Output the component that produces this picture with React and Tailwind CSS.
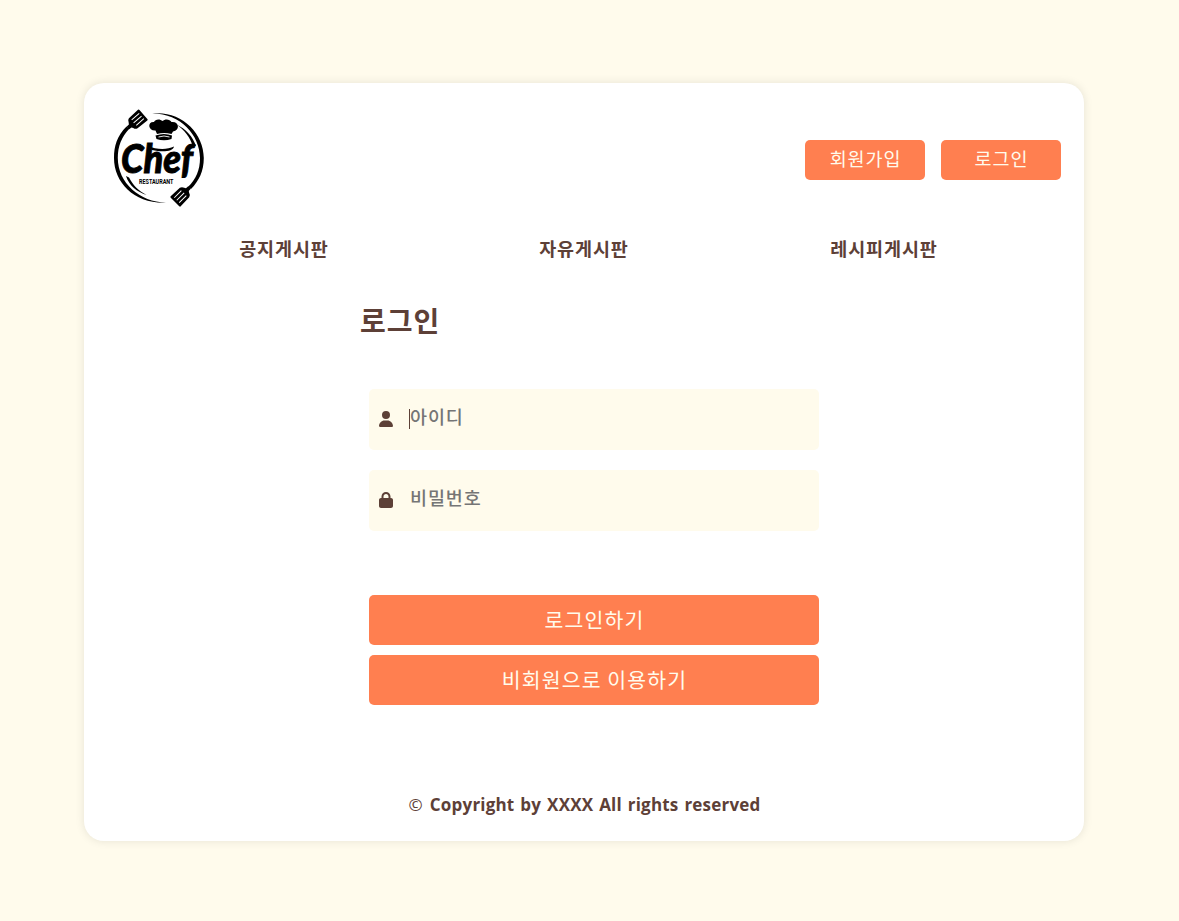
import React from "react";

const FONT = "font-['Noto_Sans_CJK_KR',sans-serif]";

function Spatula() {
  return (
    <g>
      <path d="M-6 -8.500 H6 Q7.200 -8.500 7.100 -7.500 L6.600 5 Q6 7.500 3.500 8 L2 9 L1.800 12 H-1.800 L-2 9 L-3.500 8 Q-6 7.500 -6.600 5 L-7.100 -7.500 Q-7.200 -8.500 -6 -8.500Z" fill="#000" />
      <path d="M-3.500 -6 V4 M0 -6 V4.500 M3.500 -6 V4" stroke="#fff" strokeWidth="1" />
    </g>
  );
}

function Logo() {
  return (
    <svg className="h-[100px] w-[100px]" viewBox="0 0 100 100" aria-label="Chef Restaurant">
      <path d="M17.500 18.500 C8 28 5 38 5 50 C5 75 26 96 57 94.700 C31 94 8.800 75 8.800 50 C8.800 38 12.500 29 20.500 20.500Z" />
      <path d="M43 5.500 C71 2 94.800 24 94.800 50 C94.800 63 90 73 82 81 L79 79 C87 71 91 62 91 50 C91 27 71 5 43 5.500Z" />
      <path d="M67 16.300 C77 21 84 29 87 38 L84 39 C81 29 76 22.500 67 16.300Z" />
      <path d="M17 68 L20 69.500 C24 77 29 82.500 37.700 87 C28 84 20 77.500 17 68Z" />
      <g transform="translate(28 12) rotate(49)"><Spatula /></g>
      <g transform="translate(72 88) rotate(225)"><Spatula /></g>
      <path d="M48 26 L46.500 22.500 C39 23 38 13.500 45 14 C46 11 51 10.500 53.500 13 C56 10.500 61 11 62.500 14 C70 13 71.500 22 64 23.500 L62.500 26 Q55 24 48 26Z" />
      <path d="M46.500 27.500 Q55 24.500 63 27.500 L62.500 31 Q55 33.500 47.500 31Z" />
      <path d="M49.500 29 Q55 27 60.500 29" stroke="#fff" strokeWidth="0.900" fill="none" />
      <text x="12" y="64.500" fontFamily="Lato, sans-serif" fontWeight="900" fontStyle="italic" fontSize="40" textLength="72" lengthAdjust="spacingAndGlyphs" stroke="#000" strokeWidth="0.900">Chef</text>
      <path d="M39 38 C47 41.500 58 42 65 38.500 C64 43.500 54 44.500 43 42Z" />
      <text x="30" y="75.500" fontFamily="Roboto, sans-serif" fontWeight="700" fontSize="7.700" textLength="34.500" lengthAdjust="spacingAndGlyphs">RESTAURANT</text>
    </svg>
  );
}

function UserIcon() {
  return (
    <svg className="h-4 w-[14px]" viewBox="0 0 448 512" fill="currentColor">
      <path d="M224 256A128 128 0 1 0 224 0a128 128 0 1 0 0 256zm-45.700 48C79.800 304 0 383.800 0 482.300C0 498.700 13.300 512 29.700 512H418.300c16.400 0 29.700-13.300 29.700-29.700C448 383.800 368.200 304 269.700 304H178.300z" />
    </svg>
  );
}

function LockIcon() {
  return (
    <svg className="h-4 w-[14px]" viewBox="0 0 448 512" fill="currentColor">
      <path d="M144 144v48H304V144c0-44.200-35.800-80-80-80s-80 35.800-80 80zM80 192V144C80 64.500 144.500 0 224 0s144 64.500 144 144v48h16c35.300 0 64 28.700 64 64V448c0 35.300-28.700 64-64 64H64c-35.300 0-64-28.700-64-64V256c0-35.300 28.700-64 64-64H80z" />
    </svg>
  );
}

function Field({ icon, label, focused }) {
  return (
    <div className="flex h-[61px] items-center rounded-[5px] bg-[#fffbec] pb-[1px] pl-[10px] text-[#5d4037]">
      {icon}
      <span className={`ml-4 h-5 w-px ${focused ? "bg-[#5d4037]" : "bg-transparent"}`} />
      <span className="-mt-[6px] text-[18.500px] font-medium leading-[27px] tracking-[0.900px] text-[#757575]">{label}</span>
    </div>
  );
}

export default function App() {
  return (
    <div className={`flex h-[921px] w-full bg-[#fffbec] pl-[84px] pt-[83px] ${FONT}`}>
      <main className="flex h-[758px] w-[1000px] flex-col rounded-[20px] bg-white text-[#5d4037] shadow-[0_0_10px_rgba(0,0,0,0.1)]">
        <header className="flex h-[150px] items-center justify-between pl-[25px] pr-[23px]">
          <Logo />
          <div className="flex gap-4 pt-1 text-[18.500px] tracking-[0.900px] text-[#fffbec]">
            <button className="h-10 w-[120px] rounded-[5px] bg-[#ff7f50] pb-[3px] pl-[1px]">회원가입</button>
            <button className="h-10 w-[120px] rounded-[5px] bg-[#ff7f50] pb-[3px] pl-[1px]">로그인</button>
          </div>
        </header>
        <nav className="grid h-[34px] grid-cols-3 px-[50px] text-center text-[18.500px] font-bold leading-[30px] tracking-[0.900px]">
          <span>공지게시판</span>
          <span>자유게시판</span>
          <span>레시피게시판</span>
        </nav>
        <section className="flex flex-col pl-[285px] pt-[33px]">
          <h1 className="-ml-[9px] h-10 text-[28px] font-bold leading-10 tracking-[1px]">로그인</h1>
          <div className="mt-[49px] flex w-[450px] flex-col gap-5">
            <Field icon={<UserIcon />} label="아이디" focused />
            <Field icon={<LockIcon />} label="비밀번호" />
          </div>
          <div className="mt-[64px] flex w-[450px] flex-col gap-[10px] text-[20.500px] tracking-[1.100px] text-[#fffbec]">
            <button className="h-[50px] rounded-[5px] bg-[#ff7f50] pb-[1px] pl-[1px]">로그인하기</button>
            <button className="h-[50px] rounded-[5px] bg-[#ff7f50] pb-[1px] pl-[1px]">비회원으로 이용하기</button>
          </div>
        </section>
        <footer className="mt-[88px] pl-[1px] text-center font-['Open_Sans',sans-serif] text-[17px] font-bold leading-6 tracking-[0.2px] [word-spacing:1.300px]">
          <span className="mr-[1px] font-normal">©</span> Copyright by XXXX All rights reserved
        </footer>
      </main>
    </div>
  );
}
